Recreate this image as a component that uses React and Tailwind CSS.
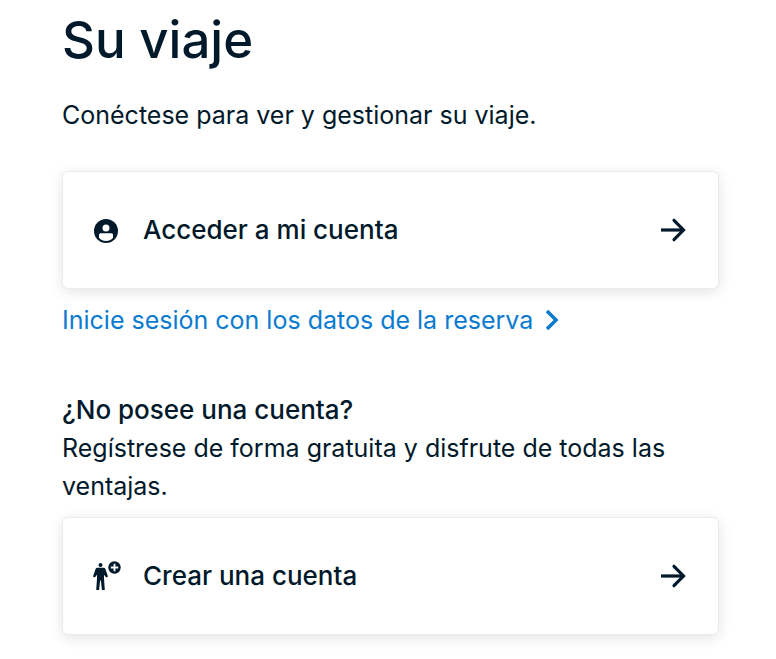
import { useState } from "react";

function UserIcon() {
  return (
    <svg viewBox="0 0 26 26" className="w-[26px] h-[26px] shrink-0" aria-hidden="true">
      <circle cx="13" cy="14" r="12" fill="#00192b" />
      <circle cx="13" cy="11" r="3.5" fill="#fff" />
      <path d="M6 17.800Q6 16.300 7.500 16.300h11Q20 16.300 20 17.800v3Q17.200 24 13 24T6 20.800z" fill="#fff" />
    </svg>
  );
}

function AddPersonIcon() {
  return (
    <svg viewBox="0 0 28 30" className="w-[28px] h-[30px] shrink-0" aria-hidden="true">
      <g fill="#00192b">
        <circle cx="7.500" cy="4" r="2" />
        <path d="M4.300 6.800h6.400q1.300 0 1.700 1.300L15 15.500l-1.800 1-2.200-2.800v3.800l.8 11.500H8.900L7.900 19.500h-.8L6.100 29H3.200L4 17.500v-3.800l-2.200 2.800-1.800-1 2.600-7.400Q3 6.800 4.300 6.800z" />
        <circle cx="21.500" cy="6.500" r="6.200" />
      </g>
      <path d="M21.500 2.800v7.400M17.800 6.500h7.400" stroke="#fff" strokeWidth="1.800" />
    </svg>
  );
}

function ArrowIcon() {
  return (
    <svg viewBox="0 0 26 26" className="w-[26px] h-[26px] shrink-0" fill="none" stroke="#00192b" strokeWidth="3.200" aria-hidden="true">
      <path d="M1 13H24" />
      <path d="M14 3.300L23.500 13L14 22.700" strokeLinecap="round" />
    </svg>
  );
}

function AccountCard({ icon, label, onClick }) {
  return (
    <button
      type="button"
      onClick={onClick}
      className="flex w-full items-center rounded-md border border-[#ebebeb] bg-white pl-[30px] pr-8 py-10 text-left shadow-[0_3px_14px_rgba(0,0,0,0.11)]"
    >
      <span className="flex w-[50px] shrink-0">{icon}</span>
      <span className="flex-1 text-[26px] leading-9 font-medium">{label}</span>
      <ArrowIcon />
    </button>
  );
}

export default function App() {
  const [, setView] = useState("home");

  return (
    <main className="min-h-screen bg-white pl-[62px] pr-[57px] pt-2 pb-6 font-[Inter,sans-serif] text-[#00192b]">
      <h1 className="text-[51px] leading-16 font-medium">Su viaje</h1>
      <p className="mt-6 text-[25px] leading-[38px]">
        Conéctese para ver y gestionar su viaje.
      </p>

      {/* Login */}
      <div className="mt-[37px]">
        <AccountCard icon={<UserIcon />} label="Acceder a mi cuenta" onClick={() => setView("login")} />
      </div>
      <a href="#reserva" className="mt-3 flex items-center gap-3 text-[25px] leading-[38px] text-[#0b7bd0]">
        Inicie sesión con los datos de la reserva
        <svg viewBox="0 0 14 22" className="w-[14px] h-[22px] shrink-0" fill="none" stroke="currentColor" strokeWidth="3.500" aria-hidden="true">
          <path d="M2 2L11 11L2 20" />
        </svg>
      </a>

      {/* Register */}
      <h2 className="mt-[52px] text-[26px] leading-[38px] font-medium">¿No posee una cuenta?</h2>
      <p className="text-[25px] leading-[38px]">
        Regístrese de forma gratuita y disfrute de todas las ventajas.
      </p>
      <div className="mt-3">
        <AccountCard icon={<AddPersonIcon />} label="Crear una cuenta" onClick={() => setView("register")} />
      </div>
    </main>
  );
}
